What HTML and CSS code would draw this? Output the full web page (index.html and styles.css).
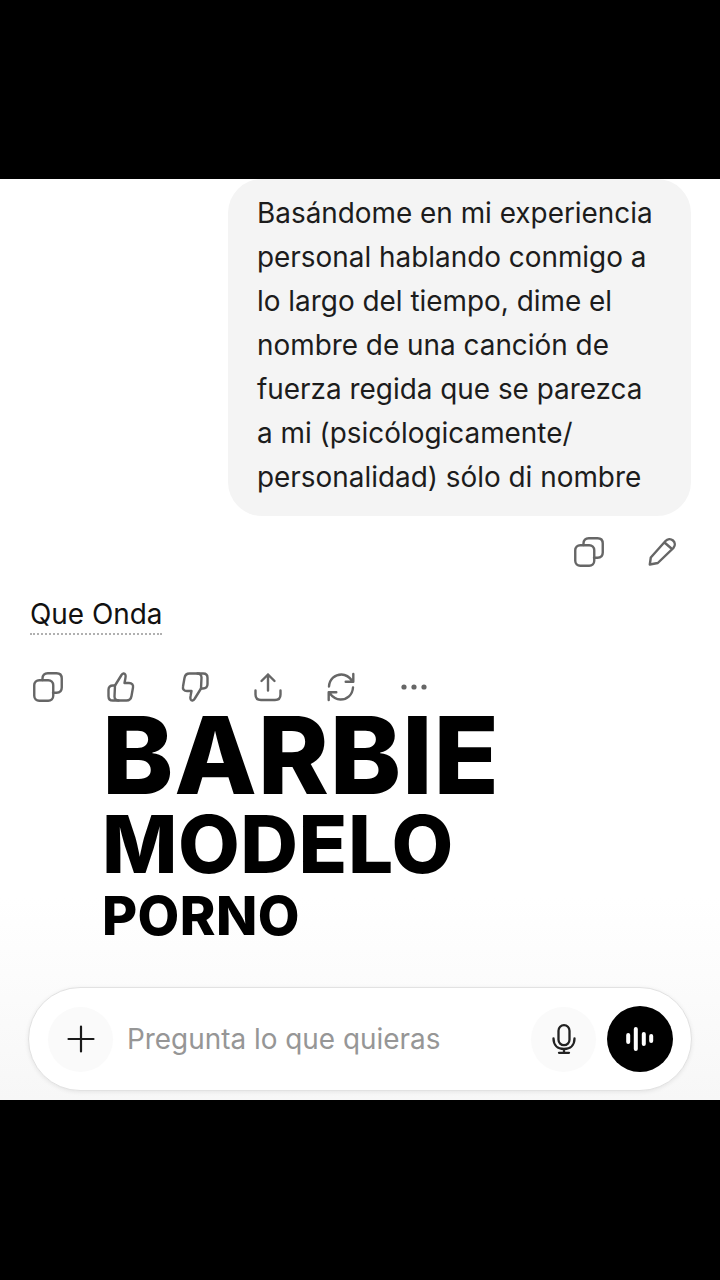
FILE: index.html
```html
<!DOCTYPE html>
<html lang="es">
<head>
<meta charset="utf-8">
<title>Chat</title>
<link rel="stylesheet" href="styles.css">
</head>
<body>
<div class="bar"></div>
<main class="screen">
  <section class="bubble-row">
    <p class="bubble">Basándome en mi experiencia<br>personal hablando conmigo a<br>lo largo del tiempo, dime el<br>nombre de una canción de<br>fuerza regida que se parezca<br>a mi (psicólogicamente/<br>personalidad) sólo di nombre</p>
  </section>
  <div class="user-actions">
    <svg class="icon" viewBox="0 0 32 32"><use href="#copy"/></svg>
    <svg class="icon" viewBox="0 0 32 32"><path d="M3.800 28.500L4.800 21.500 19.500 5C21.500 2.800 24.700 2.500 27 4.500 29.300 6.500 29.300 9.500 27.500 11.800L11.800 27ZM18.500 6.500L26 13"/></svg>
  </div>
  <p class="reply"><span class="reply-text">Que Onda</span></p>
  <div class="reply-actions">
    <svg class="icon" viewBox="0 0 32 32"><use href="#copy"/></svg>
    <svg class="icon" viewBox="0 0 32 32"><use href="#thumb"/></svg>
    <svg class="icon flip" viewBox="0 0 32 32"><use href="#thumb"/></svg>
    <svg class="icon" viewBox="0 0 32 32"><path d="M16 19.500V3.500M9.500 10L16 3.500 22.500 10M3.500 19.500v4c0 3.500 2 5.500 5.500 5.500h14c3.500 0 5.500-2 5.500-5.500v-4"/></svg>
    <svg class="icon" viewBox="0 0 32 32"><path d="M4 15.500C4.500 8 10 3.500 16.500 3.500c4.500 0 8 2.500 11.500 7M28.300 3v7.700H20.700M28 16.500C27.500 24 22 28.500 15.500 28.500c-4.500 0-8-2.500-11.500-7M3.700 29v-7.700h7.600"/></svg>
    <svg class="icon dots" viewBox="0 0 32 32"><circle cx="6" cy="16" r="2.600"/><circle cx="16" cy="16" r="2.600"/><circle cx="26" cy="16" r="2.600"/></svg>
  </div>
  <div class="headline">
    <div class="h1">BARBIE</div>
    <div class="h2">MODELO</div>
    <div class="h3">PORNO</div>
  </div>
  <div class="composer-wrap">
    <div class="composer">
      <div class="round soft">
        <svg class="plus" viewBox="0 0 28 28"><path d="M14 1.500v25M1.500 14h25"/></svg>
      </div>
      <span class="placeholder">Pregunta lo que quieras</span>
      <div class="round soft">
        <svg class="micicon" viewBox="0 0 24 30"><rect x="6.500" y="1.200" width="11" height="20" rx="5.500"/><path d="M1.500 14.500c0 6.500 4 10.500 10.500 10.500s10.500-4 10.500-10.500M12 25v3.800M7 28.800h10"/></svg>
      </div>
      <div class="round voice">
        <svg class="wave" viewBox="0 0 30 26"><path d="M3.200 9v7M10.800 3v20M18.800 8v10M26.200 10v5"/></svg>
      </div>
    </div>
  </div>
</main>
<div class="bar"></div>
<svg class="defs" aria-hidden="true">
  <defs>
    <g id="copy">
      <path d="M10.500 9V7.500c0-3.300 2-5.250 5.250-5.250H24.500c3.300 0 5.250 2 5.250 5.250v9c0 3.300-2 5.250-5.250 5.250H21"/>
      <rect x="2.250" y="9.250" width="19" height="20.500" rx="5"/>
    </g>
    <g id="thumb">
      <path d="M10 14.500L16.500 4c1-1.800 3-2 3.800-.5.600 1.200.4 2.400.1 3.700L19.500 12H24c3 0 4.500 2 4 4.500L26.500 25c-.5 3-2.200 4.500-5 4.500H13.500c-2.500 0-4-1.500-4-4z"/>
      <path d="M10 14.500H8c-3 0-4.500 1.600-4.500 4.200v6.500c0 2.700 1.600 4.300 4.300 4.300h5.700"/>
    </g>
  </defs>
</svg>
</body>
</html>
```
FILE: styles.css
```css
* { box-sizing: border-box; }
html, body { margin: 0; padding: 0; background: #000; }
body { width: 720px; height: 1280px; overflow: hidden; font-family: Inter, "Liberation Sans", sans-serif; color: #111; }
.bar { background: #000; height: 179px; }
.bar:last-of-type { height: 180px; }
.screen { height: 921px; background: linear-gradient(#fff 78%, #f7f7f7); display: flex; flex-direction: column; overflow: hidden; }
.bubble-row { display: flex; justify-content: flex-end; padding-right: 29px; }
.bubble { margin: 0; width: 463px; height: 337px; padding: 12px 0 0 29px; background: #f4f4f4; border-radius: 34px; font-size: 27.900px; line-height: 44px; color: #1c1c1c; white-space: nowrap; }
.icon { width: 32px; height: 32px; fill: none; stroke: #666; stroke-width: 2.400; stroke-linecap: round; stroke-linejoin: round; flex: none; }
.flip { transform: rotate(180deg); }
.dots { fill: #666; stroke: none; }
.user-actions { display: flex; justify-content: flex-end; gap: 41.500px; padding: 20px 42px 0 0; }
.reply { margin: 28px 0 0 30px; font-size: 27.900px; line-height: 36px; color: #111; }
.reply-text { display: inline-block; padding-bottom: 1px; border-bottom: 2px dotted #b0b0b0; }
.reply-actions { display: flex; align-items: center; gap: 41.300px; padding: 36px 0 0 32px; }
.headline { display: flex; flex-direction: column; font-weight: 800; color: #000; padding-left: 102px; }
.h1 { font-size: 107.500px; line-height: 86px; margin-top: 9px; letter-spacing: .8px; }
.h2 { font-size: 80px; line-height: 70px; margin-top: 11px; letter-spacing: .5px; }
.h3 { font-size: 54px; line-height: 52px; margin-top: 11px; letter-spacing: .4px; }
.composer-wrap { margin-top: auto; padding: 0 28px 9px; }
.composer { height: 104px; background: #fff; border: 1.500px solid #e2e2e2; border-radius: 52px; box-shadow: 0 1px 4px rgba(0,0,0,.08); display: flex; align-items: center; padding: 0 18px 0 19px; }
.round { border-radius: 50%; display: flex; align-items: center; justify-content: center; flex: none; }
.soft { width: 65px; height: 65px; background: #fafafa; }
.plus { width: 28px; height: 28px; fill: none; stroke: #1a1a1a; stroke-width: 2.200; stroke-linecap: round; }
.placeholder { margin-left: 14px; font-size: 27.900px; color: #969696; white-space: nowrap; flex: 1; }
.micicon { width: 24px; height: 30px; fill: none; stroke: #222; stroke-width: 2.300; stroke-linecap: round; }
.voice { width: 66px; height: 66px; background: #000; margin-left: 11px; }
.wave { width: 30px; height: 26px; fill: none; stroke: #fff; stroke-width: 4; stroke-linecap: round; }
.defs { position: absolute; width: 0; height: 0; }
```
